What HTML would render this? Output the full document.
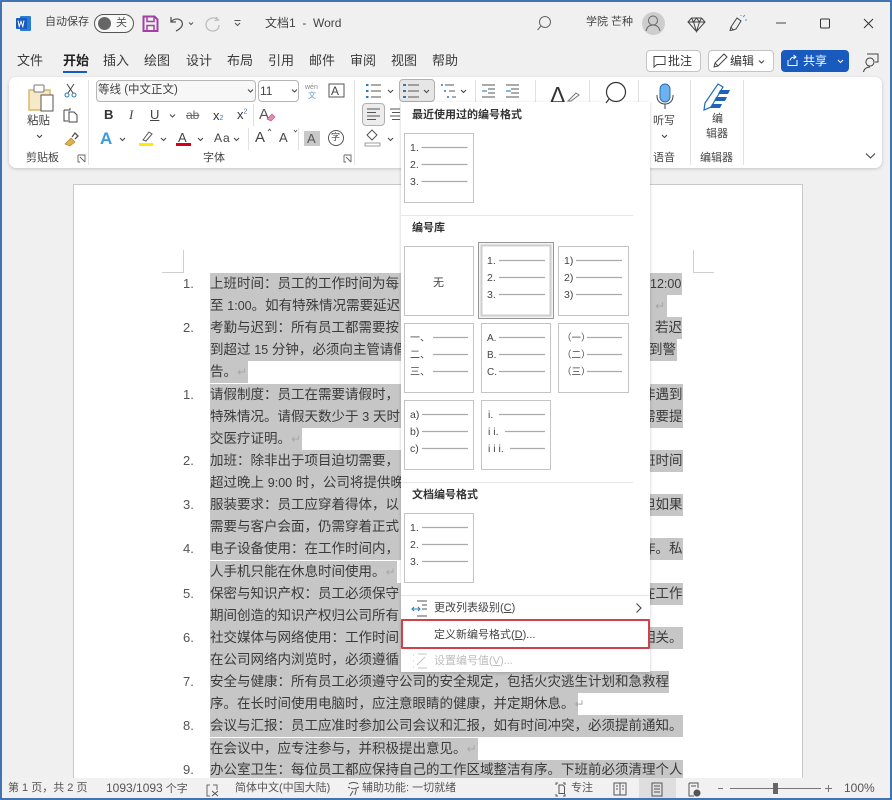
<!DOCTYPE html>
<html lang="zh-CN">
<head>
<meta charset="utf-8">
<title>文档1 - Word</title>
<style>
*{box-sizing:border-box}
html,body{margin:0;padding:0}
body{width:892px;height:800px;overflow:hidden;position:relative;background:#f0f0f0;font-family:"Liberation Sans","Noto Sans CJK SC",sans-serif;color:#333}
.t{position:absolute;white-space:nowrap;line-height:1}
#page{position:absolute;left:73px;top:184px;width:730px;height:600px;background:#fff;border:1px solid #c9c9c9;border-bottom:0}
.hl{position:absolute;background:#c6c6c6;height:22.2px}
.l{position:absolute;left:210px;font-size:13.5px;line-height:22px;white-space:nowrap;color:#3a3a3a;font-family:"Liberation Sans","Noto Sans CJK SC",sans-serif}
.r{position:absolute;font-size:13.5px;line-height:22px;white-space:nowrap;color:#3a3a3a}
.n{position:absolute;left:183px;font-size:13px;line-height:22px;color:#555}
.la{font-size:12.5px}
.pm{color:#a8a8a8;font-family:"DejaVu Sans",sans-serif;font-size:12px;line-height:0}
#ribbon{position:absolute;left:9px;top:77px;width:873px;height:91px;background:#fff;border-radius:7px;box-shadow:0 1px 3px rgba(0,0,0,.18)}
.btn{position:absolute;top:50px;height:22px;border-radius:4px;background:#fff;border:1px solid #c4c4c4}
.tab{position:absolute;top:54px;font-size:13px;line-height:14px;color:#3a3a3a;white-space:nowrap}
.rb{font-size:11px;color:#444}
.sep{position:absolute;width:1px;background:#e2e2e2}
#menu{position:absolute;left:401px;top:102px;width:249px;height:570px;background:#fff;box-shadow:0 1px 3px rgba(0,0,0,.22)}
.mh{position:absolute;font-size:11px;line-height:13px;font-weight:bold;color:#333;white-space:nowrap}
.mi{position:absolute;font-size:11px;line-height:13px;color:#444;white-space:nowrap}
.ms{position:absolute;height:1px;background:#e6e6e6}
.st{position:absolute;top:782px;font-size:11px;line-height:13px;color:#555;white-space:nowrap}
svg{position:absolute;left:0;top:0}
</style>
</head>
<body>

<div id="page"></div>

<div class="hl" style="left:210px;top:273px;width:472px"></div>
<div class="hl" style="left:210px;top:295px;width:457px"></div>
<div class="hl" style="left:210px;top:317px;width:472px"></div>
<div class="hl" style="left:210px;top:339px;width:467px"></div>
<div class="hl" style="left:210px;top:361px;width:38px"></div>
<div class="hl" style="left:210px;top:384px;width:473px"></div>
<div class="hl" style="left:210px;top:406px;width:473px"></div>
<div class="hl" style="left:210px;top:428px;width:92px"></div>
<div class="hl" style="left:210px;top:450px;width:473px"></div>
<div class="hl" style="left:210px;top:472px;width:200px"></div>
<div class="hl" style="left:210px;top:494px;width:473px"></div>
<div class="hl" style="left:210px;top:516px;width:200px"></div>
<div class="hl" style="left:210px;top:538px;width:473px"></div>
<div class="hl" style="left:210px;top:561px;width:187px"></div>
<div class="hl" style="left:210px;top:583px;width:473px"></div>
<div class="hl" style="left:210px;top:605px;width:200px"></div>
<div class="hl" style="left:210px;top:627px;width:473px"></div>
<div class="hl" style="left:210px;top:649px;width:200px"></div>
<div class="hl" style="left:210px;top:671px;width:459px"></div>
<div class="hl" style="left:210px;top:693px;width:368px"></div>
<div class="hl" style="left:210px;top:715px;width:473px"></div>
<div class="hl" style="left:210px;top:738px;width:268px"></div>
<div class="hl" style="left:210px;top:760px;width:473px;height:18px"></div>

<div class="n" style="top:273px">1.</div>
<div class="n" style="top:317px">2.</div>
<div class="n" style="top:384px">1.</div>
<div class="n" style="top:450px">2.</div>
<div class="n" style="top:494px">3.</div>
<div class="n" style="top:538px">4.</div>
<div class="n" style="top:583px">5.</div>
<div class="n" style="top:627px">6.</div>
<div class="n" style="top:671px">7.</div>
<div class="n" style="top:715px">8.</div>
<div class="n" style="top:759px;height:19px;overflow:hidden">9.</div>

<div class="l" style="top:273px">上班时间：员工的工作时间为每</div>
<div class="l" style="top:295px">至 <span class="la">1:00</span>。如有特殊情况需要延迟</div>
<div class="l" style="top:317px">考勤与迟到：所有员工都需要按</div>
<div class="l" style="top:339px">到超过 <span class="la">15</span> 分钟，必须向主管请假</div>
<div class="l" style="top:361px">告。<span class="pm">↵</span></div>
<div class="l" style="top:384px">请假制度：员工在需要请假时，</div>
<div class="l" style="top:406px">特殊情况。请假天数少于 <span class="la">3</span> 天时</div>
<div class="l" style="top:428px">交医疗证明。<span class="pm">↵</span></div>
<div class="l" style="top:450px">加班：除非出于项目迫切需要，</div>
<div class="l" style="top:472px">超过晚上 <span class="la">9:00</span> 时，公司将提供晚</div>
<div class="l" style="top:494px">服装要求：员工应穿着得体，以</div>
<div class="l" style="top:516px">需要与客户会面，仍需穿着正式</div>
<div class="l" style="top:538px">电子设备使用：在工作时间内，</div>
<div class="l" style="top:561px">人手机只能在休息时间使用。<span class="pm">↵</span></div>
<div class="l" style="top:583px">保密与知识产权：员工必须保守</div>
<div class="l" style="top:605px">期间创造的知识产权归公司所有</div>
<div class="l" style="top:627px">社交媒体与网络使用：工作时间</div>
<div class="l" style="top:649px">在公司网络内浏览时，必须遵循</div>
<div class="l" style="top:671px">安全与健康：所有员工必须遵守公司的安全规定，包括火灾逃生计划和急救程</div>
<div class="l" style="top:693px">序。在长时间使用电脑时，应注意眼睛的健康，并定期休息。<span class="pm">↵</span></div>
<div class="l" style="top:715px">会议与汇报：员工应准时参加公司会议和汇报，如有时间冲突，必须提前通知。</div>
<div class="l" style="top:738px">在会议中，应专注参与，并积极提出意见。<span class="pm">↵</span></div>
<div class="l" style="top:759px;height:19px;overflow:hidden">办公室卫生：每位员工都应保持自己的工作区域整洁有序。下班前必须清理个人</div>

<div class="r" style="left:650px;top:273px"><span class="la">12:00</span></div>
<div class="r" style="left:655px;top:295px"><span class="pm">↵</span></div>
<div class="r" style="left:655px;top:317px">若迟</div>
<div class="r" style="left:649px;top:339px">到警</div>
<div class="r" style="left:642px;top:384px">非遇到</div>
<div class="r" style="left:642px;top:406px">需要提</div>
<div class="r" style="left:642px;top:450px">班时间</div>
<div class="r" style="left:642px;top:494px">但如果</div>
<div class="r" style="left:642px;top:538px">作。私</div>
<div class="r" style="left:642px;top:583px">在工作</div>
<div class="r" style="left:642px;top:627px">相关。</div>

<!-- status bar -->
<div style="position:absolute;left:0;top:778px;width:892px;height:22px;background:#f1f1f1"></div>
<div style="position:absolute;left:639px;top:778px;width:37px;height:20px;background:#dedede"></div>
<div class="st" style="left:8px">第 1 页，共 2 页</div>
<div class="st" style="left:106px"><span style="font-size:12px">1093/1093</span> 个字</div>
<div class="st" style="left:235px">简体中文(中国大陆)</div>
<div class="st" style="left:362px">辅助功能: 一切就绪</div>
<div class="st" style="left:571px">专注</div>
<div class="st" style="left:844px;font-size:12px">100%</div>

<!-- title + tabs -->
<div style="position:absolute;left:0;top:0;width:892px;height:77px;background:#f0f0f0"></div>
<div style="position:absolute;left:0;top:168px;width:892px;height:16px;background:#f0f0f0"></div>
<div class="t" style="left:45px;top:17px;font-size:11px;color:#444">自动保存</div>
<div style="position:absolute;left:94px;top:14px;width:40px;height:19px;border:1px solid #555;border-radius:10px;background:#f8f8f8"></div>
<div style="position:absolute;left:98px;top:17px;width:13px;height:13px;border-radius:50%;background:#666"></div>
<div class="t" style="left:116px;top:18px;font-size:11px;color:#555">关</div>
<div class="t" style="left:265px;top:17px;font-size:12px;color:#444">文档1&nbsp; -&nbsp; Word</div>
<div class="t" style="left:586px;top:17px;font-size:11px;color:#444">学院 芒种</div>
<div style="position:absolute;left:642px;top:12px;width:23px;height:23px;border-radius:50%;background:#cdcdcd"></div>

<div class="tab" style="left:17px">文件</div>
<div class="tab" style="left:63px;font-weight:bold;color:#222">开始</div>
<div style="position:absolute;left:63px;top:71px;width:24px;height:2px;background:#185abd"></div>
<div class="tab" style="left:103px">插入</div>
<div class="tab" style="left:144px">绘图</div>
<div class="tab" style="left:186px">设计</div>
<div class="tab" style="left:227px">布局</div>
<div class="tab" style="left:268px">引用</div>
<div class="tab" style="left:309px">邮件</div>
<div class="tab" style="left:350px">审阅</div>
<div class="tab" style="left:391px">视图</div>
<div class="tab" style="left:432px">帮助</div>

<div class="btn" style="left:646px;width:55px"></div>
<div class="t" style="left:668px;top:55px;font-size:12px;color:#333">批注</div>
<div class="btn" style="left:708px;width:66px"></div>
<div class="t" style="left:730px;top:55px;font-size:12px;color:#333">编辑</div>
<div class="btn" style="left:781px;width:68px;background:#185abd;border-color:#185abd"></div>
<div class="t" style="left:803px;top:55px;font-size:12px;color:#fff">共享</div>

<!-- ribbon -->
<div id="ribbon"></div>
<div class="sep" style="left:88px;top:80px;height:85px"></div>
<div class="sep" style="left:354px;top:80px;height:85px"></div>
<div class="sep" style="left:475px;top:80px;height:24px"></div>
<div class="sep" style="left:535px;top:80px;height:24px"></div>
<div class="sep" style="left:589px;top:80px;height:24px"></div>
<div class="sep" style="left:638px;top:80px;height:85px"></div>
<div class="sep" style="left:690px;top:80px;height:85px"></div>
<div class="sep" style="left:743px;top:80px;height:85px"></div>
<div class="sep" style="left:253px;top:104px;height:22px"></div>
<div class="sep" style="left:248px;top:128px;height:22px"></div>
<div class="sep" style="left:298px;top:128px;height:22px"></div>

<div class="t rb" style="left:27px;top:116px;font-size:11.5px">粘贴</div>
<div class="t rb" style="left:26px;top:153px">剪贴板</div>
<div style="position:absolute;left:96px;top:80px;width:160px;height:22px;border:1px solid #b5b5b5;border-radius:4px;background:#f7f7f7"></div>
<div class="t" style="left:98px;top:85px;font-size:11.5px;color:#444">等线 (中文正文)</div>
<div style="position:absolute;left:258px;top:80px;width:41px;height:22px;border:1px solid #b5b5b5;border-radius:4px;background:#fff"></div>
<div class="t" style="left:260px;top:85px;font-size:12px;color:#444">11</div>
<div class="t" style="left:305px;top:84px;font-size:7px;color:#888">wén</div>
<div class="t" style="left:308px;top:92px;font-size:8px;color:#6b9bc9">文</div>
<div class="t" style="left:331px;top:85px;font-size:12px;color:#444">A</div>
<div class="t" style="left:104px;top:108px;font-size:13px;font-weight:bold;color:#333">B</div>
<div class="t" style="left:129px;top:108px;font-size:13px;font-style:italic;font-family:'Liberation Serif',serif;color:#444">I</div>
<div class="t" style="left:150px;top:108px;font-size:13px;color:#444;text-decoration:underline">U</div>
<div class="t" style="left:186px;top:109px;font-size:12px;color:#666;text-decoration:line-through">ab</div>
<div class="t" style="left:213px;top:109px;font-size:13px;color:#333">x<span style="font-size:7px;color:#3a7ab8">2</span></div>
<div class="t" style="left:237px;top:108px;font-size:13px;color:#333">x<sup style="font-size:7px;color:#3a7ab8;line-height:0">2</sup></div>
<div class="t" style="left:259px;top:107px;font-size:15px;color:#555">A</div>
<div class="t" style="left:100px;top:130px;font-size:17px;font-weight:bold;color:#3a9be0">A</div>
<div class="t" style="left:178px;top:131px;font-size:13px;color:#444">A</div>
<div class="t" style="left:214px;top:132px;font-size:12px;color:#444;letter-spacing:1px">Aa</div>
<div class="t" style="left:255px;top:130px;font-size:15px;color:#444">A</div>
<div class="t" style="left:279px;top:131px;font-size:13px;color:#444">A</div>
<div style="position:absolute;left:304px;top:131px;width:16px;height:15px;background:#c8c8c8"></div>
<div class="t" style="left:307px;top:132px;font-size:13px;color:#555">A</div>
<div class="t" style="left:331px;top:133px;font-size:9px;color:#444">字</div>
<div class="t rb" style="left:203px;top:153px">字体</div>
<div style="position:absolute;left:399px;top:79px;width:36px;height:23px;background:#e6e6e6;border:1px solid #b0b0b0;border-radius:4px"></div>
<div style="position:absolute;left:362px;top:103px;width:23px;height:23px;background:#ececec;border:1px solid #b0b0b0;border-radius:4px"></div>
<div class="t" style="left:550px;top:84px;font-size:23px;color:#333">Δ</div>
<div class="t rb" style="left:653px;top:116px;font-size:11px">听写</div>
<div class="t rb" style="left:653px;top:153px">语音</div>
<div class="t rb" style="left:712px;top:114px">编</div>
<div class="t rb" style="left:706px;top:129px">辑器</div>
<div class="t rb" style="left:700px;top:153px">编辑器</div>

<!-- dropdown menu -->
<div id="menu"></div>
<div class="mh" style="left:412px;top:109px">最近使用过的编号格式</div>
<div class="ms" style="left:401px;top:215px;width:232px"></div>
<div class="mh" style="left:412px;top:222px">编号库</div>
<div class="ms" style="left:401px;top:482px;width:232px"></div>
<div class="mh" style="left:412px;top:489px">文档编号格式</div>
<div class="ms" style="left:401px;top:595px;width:249px"></div>
<div class="mi" style="left:434px;top:602px">更改列表级别(<u>C</u>)</div>
<div class="mi" style="left:434px;top:629px">定义新编号格式(<u>D</u>)...</div>
<div class="mi" style="left:434px;top:655px;color:#bdbdbd">设置编号值(<u>V</u>)...</div>
<div style="position:absolute;left:401px;top:619px;width:249px;height:30px;border:2px solid #d2404c;border-radius:1px"></div>

<svg width="892" height="800" viewBox="0 0 892 800" fill="none">
  <!-- crop marks -->
  <path d="M162 272.500H183.500V250M693.500 250V272.500H714" stroke="#cfcfcf"/>

  <!-- word icon -->
  <rect x="20" y="16" width="11" height="15" rx="1" fill="#2b7cd3"/>
  <rect x="16" y="18" width="11" height="11" rx="1" fill="#185abd"/>
  <path d="M18 20.500l1.200 6 1.800-5 1.800 5 1.200-6" stroke="#fff" stroke-width="1"/>
  <!-- save -->
  <path d="M143.500 16.500h11l3 3v11.500h-14z" stroke="#a43fa6" stroke-width="2"/>
  <path d="M147 17v4.500h7V17M147 31v-5.500h7V31" stroke="#a43fa6" stroke-width="1.500"/>
  <!-- undo / redo -->
  <path d="M171 17v5h5M171 22c3-4 9-4 11 0 1.500 4-2 7-6 9" stroke="#555" stroke-width="1.300"/>
  <path d="M189 22.500l2 2 2-2" stroke="#555"/>
  <path d="M216 17l2.500 3-4 .5M217 19c-5-3-11 1-11 5.500 0 4 3 6.500 7 6.500 3 0 6-2 6-6" stroke="#bdbdbd" stroke-width="1.300"/>
  <path d="M234.500 20.500h6M235 23l2.500 2.500L240 23" stroke="#555"/>
  <!-- search -->
  <circle cx="545" cy="22" r="5.500" stroke="#666" stroke-width="1"/>
  <path d="M541 26l-3.500 4" stroke="#666" stroke-width="1"/>
  <!-- avatar -->
  <circle cx="653" cy="20.500" r="4.500" stroke="#666"/>
  <path d="M646 31c1-4.500 3.500-6 7-6s6 1.500 7 6" stroke="#666"/>
  <!-- diamond -->
  <path d="M691.500 18h10l3.500 4-8.500 9.500L688 22zM688 22h17M693.500 22l3 9.500 3-9.500M691.500 18l2 4 3-4 3 4 2-4" stroke="#444"/>
  <!-- pen/feedback -->
  <path d="M733 30l-2-3 6-9 4 3-5 8zM731 27l-1 3.500 3-.5" stroke="#444"/>
  <path d="M743 17l2-2M745 20h2M741 16v-1" stroke="#5a9bd5"/>
  <!-- window controls -->
  <path d="M776 23h10" stroke="#444"/>
  <rect x="820.500" y="19" width="9" height="9" rx="1" stroke="#333"/>
  <path d="M864 19l9 9M873 19l-9 9" stroke="#333"/>

  <!-- top-right buttons icons -->
  <path d="M654 56.500h11v8h-8l-3 2.500z" stroke="#444"/>
  <path d="M714 67l1-4 9-9 3 3-9 9zM715 63l3 3" stroke="#444"/>
  <path d="M759 60.500l2.500 2.500 2.500-2.500" stroke="#444"/>
  <path d="M788 60v5.500h9V60M790 60.500c.5-2.500 2-3.500 5-3.500M793.500 55l2.500 2-2.500 2" stroke="#fff"/>
  <path d="M838 60l2.500 2.500L843 60" stroke="#fff"/>
  <path d="M867 54h11v8h-3M870 66a4 4 0 1 0-.1 0zM863.500 72c.5-3 3-5 6.500-5" stroke="#444"/>

  <!-- clipboard -->
  <path d="M29 90h21v20H29z" fill="#f5e9c8" stroke="#d9b768" stroke-width="1.500"/>
  <rect x="34" y="85" width="10" height="7" rx="1" fill="#fff" stroke="#777"/>
  <rect x="41" y="95" width="12" height="16" fill="#fff" stroke="#555"/>
  <path d="M37 135l2.500 2.500L42 135" stroke="#444"/>
  <!-- scissors -->
  <path d="M67 84l6 9M74 84l-6 9" stroke="#444"/>
  <circle cx="67" cy="95" r="2" stroke="#2c79b8"/><circle cx="74" cy="95" r="2" stroke="#2c79b8"/>
  <!-- copy -->
  <path d="M64 110h6v-2M64 110v11h4" stroke="#444"/>
  <path d="M69 112h5l3 3v7h-8z" stroke="#444"/>
  <!-- brush -->
  <path d="M65 144l6-6 4 4-5 4z" fill="#e2b04a" stroke="#a8853a" stroke-width=".7"/>
  <path d="M72 137l3-4 3 3-3 3" stroke="#555" stroke-width="1.300"/>
  <!-- launchers -->
  <path d="M78 155h7v7M78 155v7h2M80 157l5 5" stroke="#666" stroke-width=".9"/>
  <path d="M344 155h7v7M344 155v7h2M346 157l5 5" stroke="#666" stroke-width=".9"/>

  <!-- combo chevrons -->
  <path d="M248 89.500l2.500 2.500 2.500-2.500M292 89.500l2.500 2.500 2.500-2.500" stroke="#444"/>
  <rect x="329" y="84" width="15" height="13" stroke="#555"/>
  <!-- small chevrons -->
  <path d="M170 114.500l2.500 2.500 2.500-2.500M120 138l2.500 2.500 2.500-2.500M161 138l2.500 2.500 2.500-2.500M198 138l2.500 2.500 2.500-2.500M234 138l2.500 2.500 2.500-2.500" stroke="#444"/>
  <path d="M388 90l2.500 2.500L393 90M424 90l2.500 2.500L429 90M461 90l2.500 2.500L466 90M388 138l2.500 2.500L393 138" stroke="#444"/>
  <!-- eraser -->
  <path d="M267 119l5-5 3 3-4 4z" fill="#e58ab3" stroke="#c25a8b" stroke-width=".7"/>
  <!-- highlight bar, red bar -->
  <rect x="139" y="143" width="14" height="3" fill="#ffeb00"/>
  <path d="M143 140l6-8 3 2-6 7z" stroke="#555"/>
  <rect x="176" y="143" width="15" height="3" fill="#d4001a"/>
  <path d="M268 131l1.500-2 1.500 2M294 130l1.500 2 1.500-2" stroke="#555" stroke-width=".8"/>
  <circle cx="336" cy="138" r="7.500" stroke="#555"/>
  <!-- bullets -->
  <g stroke-width="1.100">
    <path d="M371 85h10M371 91h10M371 97h10" stroke="#555"/>
    <path d="M366 85h2.500M366 91h2.500M366 97h2.500" stroke="#2c79b8" stroke-width="2"/>
    <path d="M408 85h11M408 91h11M408 97h11" stroke="#555"/>
    <path d="M403 85h3M403 91h3M403 97h3" stroke="#2c79b8" stroke-width="2"/>
    <path d="M445 85h9M449 91h6M452 97h4" stroke="#555"/>
    <path d="M441 85h2M444 91h2M447 97h2" stroke="#2c79b8" stroke-width="1.500"/>
    <path d="M482 85h13M488 89h7M488 93h7M482 97h13" stroke="#555"/>
    <path d="M487 91h-5" stroke="#2c79b8"/>
    <path d="M506 85h13M511 89h8M511 93h8M506 97h13" stroke="#555"/>
    <path d="M506 91h5" stroke="#2c79b8"/>
    <!-- align -->
    <path d="M367 109h13M367 112.500h9M367 116h13M367 119.500h9" stroke="#555"/>
    <path d="M390 109h10M392 112.500h8M390 116h10M392 119.500h8" stroke="#555"/>
  </g>
  <!-- fill -->
  <path d="M372 130l5 5-5 5-5-5z" stroke="#555"/>
  <rect x="365" y="143" width="15" height="3" stroke="#888" stroke-width=".8"/>
  <!-- styles pen -->
  <path d="M568 101l8-8 3 2-8 6z" stroke="#777"/>
  <!-- big search circle -->
  <circle cx="616" cy="92" r="9.500" stroke="#333" stroke-width="1.200"/>
  <path d="M609 99l-3 4" stroke="#333" stroke-width="1.200"/>
  <!-- mic -->
  <rect x="660" y="84" width="10" height="18" rx="5" fill="#6db2ee" stroke="#2c6fb0"/>
  <path d="M657 95v1c0 5 3.500 8 8 8s8-3 8-8v-1M665 104v5" stroke="#444"/>
  <path d="M662 135l2.500 2.500 2.500-2.500" stroke="#444"/>
  <!-- editor -->
  <path d="M704 110l1-7 13-19 5 3-12 20z" stroke="#1f6bbd" stroke-width="1.200" fill="#fff"/>
  <path d="M720 90h10l-2 4h-10zM716 97h11l-2 4h-11zM712 104h10l-2 4h-10z" fill="#1f62b6"/>
  <!-- collapse -->
  <path d="M866 153.500l4.500 4.500 4.500-4.500" stroke="#444" stroke-width="1.100"/>

  <!-- thumbnails -->
  <g stroke="#c4c4c4" fill="#fff">
    <rect x="404.500" y="133.500" width="69" height="69"/>
    <rect x="404.500" y="246.500" width="69" height="69"/>
    <rect x="558.500" y="246.500" width="70" height="69"/>
    <rect x="404.500" y="323.500" width="69" height="69"/>
    <rect x="481.500" y="323.500" width="69" height="69"/>
    <rect x="558.500" y="323.500" width="70" height="69"/>
    <rect x="404.500" y="400.500" width="69" height="69"/>
    <rect x="481.500" y="400.500" width="69" height="69"/>
    <rect x="404.500" y="513.500" width="69" height="69"/>
    <rect x="478.500" y="242.500" width="75" height="76" stroke="#999" fill="#f2f2f2"/>
    <rect x="481.500" y="245.500" width="69" height="70" stroke="#cfcfcf" stroke-width="2" fill="#fff"/>
  </g>
  <g stroke="#aaa" stroke-width="1.200">
    <path d="M421.500 147.500h46M421.500 164.500h46M421.500 181.500h46"/>
    <path d="M499 260.500h46M499 277.500h46M499 294.500h46"/>
    <path d="M576 260.500h46M576 277.500h46M576 294.500h46"/>
    <path d="M433 337.500h35M433 354.500h35M433 371.500h35"/>
    <path d="M499 337.500h46M499 354.500h46M499 371.500h46"/>
    <path d="M587 337.500h35M587 354.500h35M587 371.500h35"/>
    <path d="M422 414.500h46M422 431.500h46M422 448.500h46"/>
    <path d="M499 414.500h46M505 431.500h40M510 448.500h35"/>
    <path d="M422 527.500h46M422 544.500h46M422 561.500h46"/>
  </g>
  <g font-family="'Liberation Sans','Noto Sans CJK SC',sans-serif" font-size="10.500" fill="#444">
    <text x="410" y="151">1.</text><text x="410" y="168">2.</text><text x="410" y="185">3.</text>
    <text x="433" y="286" font-size="11">无</text>
    <text x="487" y="264">1.</text><text x="487" y="281">2.</text><text x="487" y="298">3.</text>
    <text x="564" y="264">1)</text><text x="564" y="281">2)</text><text x="564" y="298">3)</text>
    <text x="410" y="341" font-size="10">一、</text><text x="410" y="358" font-size="10">二、</text><text x="410" y="375" font-size="10">三、</text>
    <text x="487" y="341" font-size="10">A.</text><text x="487" y="358" font-size="10">B.</text><text x="487" y="375" font-size="10">C.</text>
    <text x="562" y="341" font-size="9.500">（一）</text><text x="562" y="358" font-size="9.500">（二）</text><text x="562" y="375" font-size="9.500">（三）</text>
    <text x="410" y="418">a)</text><text x="410" y="435">b)</text><text x="410" y="452">c)</text>
    <text x="488" y="418">i.</text><text x="488" y="435">i i.</text><text x="488" y="452">i i i.</text>
    <text x="410" y="531">1.</text><text x="410" y="548">2.</text><text x="410" y="565">3.</text>
  </g>
  <!-- menu icons -->
  <path d="M417 601h10M422 605h5M422 609h5M417 616h10" stroke="#555"/>
  <path d="M412 609h8M414 607l-2 2 2 2M418 607l2 2-2 2" stroke="#2c79b8"/>
  <path d="M636.500 603.500l4.500 4.500-4.500 4.500" stroke="#444" stroke-width="1.100"/>
  <path d="M418 654h9M418 668h9M413 655h1M413 661h1M413 667h1M417 665l8-8" stroke="#c4c4c4"/>

  <!-- status icons -->
  <path d="M210 785h-3v11h3M213 785h4v5" stroke="#666"/>
  <path d="M212 791l6 5M218 791l-6 5" stroke="#555"/>
  <path d="M349 784c2-2 7-2 9 0M351 788c1 1 4 1 5 0 1 3-1 4-1 7M350 796l3-5M348 787l2 1M359 787l-2 1" stroke="#555"/>
  <path d="M558 783h-2v2M563 783h2v2M558 796h-2v-2M565 794v2h-2M559 785h4l1.500 2v6.500H559z" stroke="#555"/>
  <path d="M614 783h6v12h-6zM620 783h6v12h-6zM616 786h2M616 789h2M622 786h2M622 789h2" stroke="#555"/>
  <path d="M652 783h10v13h-10zM654 786h6M654 789h6M654 792h6" stroke="#555"/>
  <path d="M689 783h9v5M689 783v13h5M691 786h5" stroke="#555"/>
  <circle cx="697" cy="793" r="3.500" fill="#555"/>
  <path d="M718 788.500h5M730 788.500h91M825 788.500h7M828.500 785v7" stroke="#777"/>
  <rect x="773" y="783" width="5" height="11" fill="#666"/>

  <!-- window frame -->
  <rect x="1" y="1" width="890" height="798" stroke="#2f67a8" stroke-width="1.800"/>
</svg>
</body>
</html>
